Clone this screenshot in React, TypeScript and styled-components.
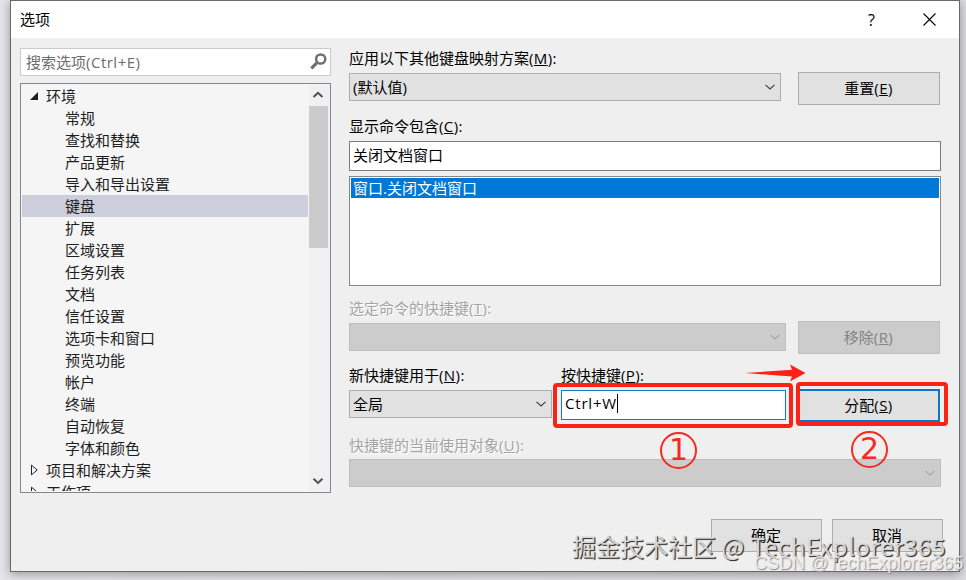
import React from "react";
import styled, { createGlobalStyle, css } from "styled-components";

const GlobalStyle = createGlobalStyle`
  * { box-sizing: border-box; }
  html, body { margin: 0; padding: 0; }
  body {
    width: 966px;
    height: 580px;
    overflow: hidden;
    background: #dcdce0;
    font-family: "Open Sans", "Noto Sans CJK SC", sans-serif;
    font-size: 15px;
    color: #000;
  }
`;

const Desktop = styled.div`
  position: relative;
  width: 966px;
  height: 580px;
  padding: 0 6px 8px 10px;
  overflow: hidden;
  background: linear-gradient(90deg, #e6e6ea, #dddde1);
`;

const Dialog = styled.main`
  display: flex;
  flex-direction: column;
  width: 950px;
  height: 572px;
  border: 1px solid #68696b;
  background: #efefef;
  box-shadow: 0 2px 10px rgba(0, 0, 0, 0.36);
`;

const TitleBar = styled.header`
  display: flex;
  align-items: center;
  height: 37px;
  padding-left: 9px;
  background: #fff;
`;

const Title = styled.h1`
  flex: 1;
  margin: 0;
  padding-bottom: 2px;
  font-size: 15px;
  font-weight: 400;
`;

const TitleButton = styled.button<{ $width: number }>`
  display: flex;
  align-items: center;
  justify-content: center;
  width: ${(p) => p.$width}px;
  height: 36px;
  padding: 0;
  border: 0;
  background: none;
  font: 16px "Open Sans", sans-serif;
`;

const Body = styled.div`
  display: flex;
  gap: 18px;
  height: 471px;
  padding: 10px 18px 0 9px;
`;

const Sidebar = styled.aside`
  display: flex;
  flex-direction: column;
  gap: 7px;
  width: 311px;
`;

const Search = styled.div`
  display: flex;
  align-items: center;
  justify-content: space-between;
  height: 28px;
  padding: 0 3px 1px 5px;
  border: 1px solid #c9cad3;
  background: #fff;
  color: #6d6d6d;
`;

const Latin = styled.span<{ $spacing: number }>`
  letter-spacing: ${(p) => p.$spacing}px;
`;

const Tree = styled.div`
  display: flex;
  height: 410px;
  border: 1px solid #828790;
  background: #f5f5f5;
`;

const TreeItems = styled.div`
  width: 288px;
  height: 407px;
  padding: 1px 1px 0;
  overflow: hidden;
`;

const TreeItem = styled.div<{ $level: 0 | 1; $selected?: boolean }>`
  display: flex;
  align-items: center;
  height: 22px;
  padding-left: ${(p) => (p.$level ? 43 : 7)}px;
  background: ${(p) => (p.$selected ? "#cccedb" : "transparent")};
  color: #1e1e1e;
  line-height: 22px;
`;

const Expander = styled.svg`
  width: 12px;
  height: 12px;
  margin-right: 5px;
`;

const Scrollbar = styled.div`
  display: flex;
  flex-direction: column;
  align-items: center;
  width: 21px;
  background: #f0f0f0;
`;

const ScrollArrow = styled.div`
  display: flex;
  align-items: center;
  justify-content: center;
  width: 18px;
  height: 22px;
  margin-right: 3px;
`;

const ScrollThumb = styled.div`
  width: 19px;
  height: 142px;
  margin: 0 2px auto 0;
  background: #cbcbcb;
`;

const Form = styled.section`
  display: flex;
  flex-direction: column;
  width: 592px;
`;

const Label = styled.label<{ $disabled?: boolean; $height: number; $top?: number; $line?: number }>`
  display: block;
  height: ${(p) => p.$height}px;
  margin-top: ${(p) => p.$top ?? 0}px;
  line-height: ${(p) => p.$line ?? 20}px;
  white-space: nowrap;
  color: ${(p) => (p.$disabled ? "#a3a3a3" : "#000")};
  text-shadow: ${(p) => (p.$disabled ? "1px 1px 0 #fff" : "none")};
`;

const Row = styled.div<{ $height: number }>`
  display: flex;
  align-items: flex-start;
  justify-content: space-between;
  height: ${(p) => p.$height}px;
  padding-right: 1px;
`;

const Select = styled.div<{ $width: number; $top?: number; $disabled?: boolean }>`
  display: flex;
  flex: none;
  align-items: center;
  justify-content: space-between;
  width: ${(p) => p.$width}px;
  height: 28px;
  margin-top: ${(p) => p.$top ?? 0}px;
  padding: 0 4px 0 3px;
  border: 1px solid ${(p) => (p.$disabled ? "#bfbfbf" : "#adadad")};
  background: ${(p) => (p.$disabled ? "#cccccc" : "#e1e1e1")};
  color: ${(p) => (p.$disabled ? "#a5a5a5" : "#3c3c3c")};
`;

const SelectValue = styled.span`
  padding-bottom: 2px;
  color: #000;
`;

const Button = styled.button<{ $width: number; $primary?: boolean }>`
  flex: none;
  width: ${(p) => p.$width}px;
  height: 33px;
  padding: 0 1px 2px 0;
  border: 1px solid #adadad;
  background: #e1e1e1;
  color: #000;
  font: inherit;
  line-height: 20px;
  ${(p) => p.$primary && css`border: 2px solid #0b75c9;`}
  &:disabled {
    border-color: #bfbfbf;
    background: #cccccc;
    color: #838383;
  }
`;

const TextField = styled.div<{ $focused?: boolean }>`
  display: flex;
  align-items: center;
  width: ${(p) => (p.$focused ? 225 : 592)}px;
  height: 30px;
  padding: 0 3px 4px;
  border: 1px solid ${(p) => (p.$focused ? "#0f7ac8" : "#7a7a7a")};
  background: #fff;
`;

const Caret = styled.i`
  width: 1px;
  height: 19px;
  background: #000;
`;

const CommandList = styled.div`
  height: 110px;
  margin-top: 5px;
  padding: 1px;
  border: 1px solid #828790;
  background: #fff;
`;

const Command = styled.div`
  height: 20px;
  padding-left: 2px;
  background: #0078d7;
  color: #fff;
  line-height: 20px;
`;

const Shortcuts = styled.div`
  display: grid;
  grid-template-columns: 212px 237px 142px;
  height: 69px;
`;

const Column = styled.div`
  display: flex;
  flex-direction: column;
`;

const Footer = styled.footer`
  display: flex;
  justify-content: flex-end;
  gap: 10px;
  padding: 10px 16px 0 0;
`;

const Highlight = styled.div<{ $x: number; $y: number; $w: number; $h: number }>`
  position: absolute;
  left: ${(p) => p.$x}px;
  top: ${(p) => p.$y}px;
  width: ${(p) => p.$w}px;
  height: ${(p) => p.$h}px;
  border: 4px solid #fb2317;
  border-radius: 4px;
`;

const StepMark = styled.div<{ $x: number; $y: number }>`
  position: absolute;
  left: ${(p) => p.$x}px;
  top: ${(p) => p.$y}px;
  display: flex;
  align-items: center;
  justify-content: center;
  width: 37px;
  height: 37px;
  padding-bottom: 1px;
  border: 2px solid #f62a1e;
  border-radius: 50%;
  color: #f62a1e;
  font: 30px/30px "DejaVu Sans", sans-serif;
`;

const Arrow = styled.svg`
  position: absolute;
  left: 744px;
  top: 364px;
`;

const Watermark = styled.div<{ $x: number; $y: number; $size: number; $light?: boolean }>`
  position: absolute;
  left: ${(p) => p.$x}px;
  top: ${(p) => p.$y}px;
  font: ${(p) => p.$size}px/30px ${(p) => (p.$light ? '"Liberation Sans"' : '"Noto Sans CJK SC"')}, sans-serif;
  white-space: nowrap;
  color: ${(p) => (p.$light ? "rgba(240,240,242,.9)" : "rgba(222,222,222,.95)")};
  text-shadow: ${(p) => (p.$light ? "1px 1px 1px #8a8a8a" : "1px 1px 1px #333, 1px 1px 0 #666")};
`;

const Chevron = ({ up = false, bold = false }: { up?: boolean; bold?: boolean }) => (
  <svg width="12" height="8" viewBox="0 0 12 8" fill="none" stroke={bold ? "#505050" : "currentColor"} strokeWidth={bold ? 2 : 1.1}>
    <path d={up ? "M1.5 6 6 1.8 10.5 6" : "M1.5 1.8 6 6 10.5 1.8"} />
  </svg>
);

const AccessKey = ({ letter }: { letter: string }) => (
  <Latin $spacing={0.4}>(<u>{letter}</u>)</Latin>
);

const topics = [
  "常规", "查找和替换", "产品更新", "导入和导出设置", "键盘", "扩展", "区域设置", "任务列表",
  "文档", "信任设置", "选项卡和窗口", "预览功能", "帐户", "终端", "自动恢复", "字体和颜色",
];

const ClosedExpander = () => (
  <Expander viewBox="0 0 12 12"><path d="M2.5 1.2v9.6L8.2 6z" fill="#fff" stroke="#1e1e1e" /></Expander>
);

export default function App() {
  return (
    <Desktop>
      <GlobalStyle />
      <Dialog>
        <TitleBar>
          <Title>选项</Title>
          <TitleButton $width={57}>?</TitleButton>
          <TitleButton $width={59}>
            <svg width="13" height="13" viewBox="0 0 13 13" stroke="#000" strokeWidth="1.1"><path d="m.5.5 12 12m0-12-12 12" /></svg>
          </TitleButton>
        </TitleBar>
        <Body>
          <Sidebar>
            <Search>
              <span>搜索选项<Latin $spacing={0.5}>(Ctrl+E)</Latin></span>
              <svg width="17" height="17" viewBox="0 0 17 17" fill="none" stroke="#6f6f6f">
                <circle cx="10.7" cy="6" r="4.6" strokeWidth="2.5" />
                <path d="m7.3 9.4-6 6" strokeWidth="3.2" />
              </svg>
            </Search>
            <Tree>
              <TreeItems>
                <TreeItem $level={0}>
                  <Expander viewBox="0 0 12 12"><path d="M9 2v8H1z" fill="#1e1e1e" /></Expander>环境
                </TreeItem>
                {topics.map((t) => <TreeItem key={t} $level={1} $selected={t === "键盘"}>{t}</TreeItem>)}
                <TreeItem $level={0}><ClosedExpander />项目和解决方案</TreeItem>
                <TreeItem $level={0}><ClosedExpander />工作项</TreeItem>
              </TreeItems>
              <Scrollbar>
                <ScrollArrow><Chevron up bold /></ScrollArrow>
                <ScrollThumb />
                <ScrollArrow><Chevron bold /></ScrollArrow>
              </Scrollbar>
            </Tree>
          </Sidebar>
          <Form>
            <Label $height={24}>应用以下其他键盘映射方案<AccessKey letter="M" />:</Label>
            <Row $height={44}>
              <Select $width={432} $top={1}><SelectValue>(默认值)</SelectValue><Chevron /></Select>
              <Button $width={142}>重置<AccessKey letter="E" /></Button>
            </Row>
            <Label $height={25}>显示命令包含<AccessKey letter="C" />:</Label>
            <TextField>关闭文档窗口</TextField>
            <CommandList><Command>窗口.关闭文档窗口</Command></CommandList>
            <Label $height={22} $top={13} $line={18} $disabled>选定命令的快捷键<AccessKey letter="T" />:</Label>
            <Row $height={45}>
              <Select $width={437} $top={2} $disabled><span /><Chevron /></Select>
              <Button $width={142} disabled>移除<AccessKey letter="R" /></Button>
            </Row>
            <Shortcuts>
              <Column>
                <Label $height={24} $line={18}>新快捷键用于<AccessKey letter="N" />:</Label>
                <Select $width={203}><SelectValue>全局</SelectValue><Chevron /></Select>
              </Column>
              <Column>
                <Label $height={24} $line={18}>按快捷键<AccessKey letter="P" />:</Label>
                <TextField $focused><Latin $spacing={0.8}>Ctrl+W</Latin><Caret /></TextField>
              </Column>
              <Column>
                <Label $height={23} />
                <Button $width={142} $primary>分配<AccessKey letter="S" /></Button>
              </Column>
            </Shortcuts>
            <Label $height={23} $top={1} $line={18} $disabled>快捷键的当前使用对象<AccessKey letter="U" />:</Label>
            <Select $width={592} $disabled><span /><Chevron /></Select>
          </Form>
        </Body>
        <Footer>
          <Button $width={111}>确定</Button>
          <Button $width={111}>取消</Button>
        </Footer>
      </Dialog>
      <Highlight $x={553} $y={383} $w={240} $h={45} />
      <Highlight $x={796} $y={382} $w={152} $h={44} />
      <Arrow width="62" height="18" viewBox="0 0 62 18" fill="#fb2317"><path d="M1 9 48 5.7 46 .5 61.5 9 46 17.5 48 12.5z" /></Arrow>
      <StepMark $x={660} $y={432}>1</StepMark>
      <StepMark $x={851} $y={431}>2</StepMark>
      <Watermark $x={572} $y={531} $size={24}>掘金技术社区 <Latin $spacing={0.62}>@ TechExplorer365</Latin></Watermark>
      <Watermark $x={754} $y={548} $size={18} $light>CSDN @TechExplorer365</Watermark>
    </Desktop>
  );
}
